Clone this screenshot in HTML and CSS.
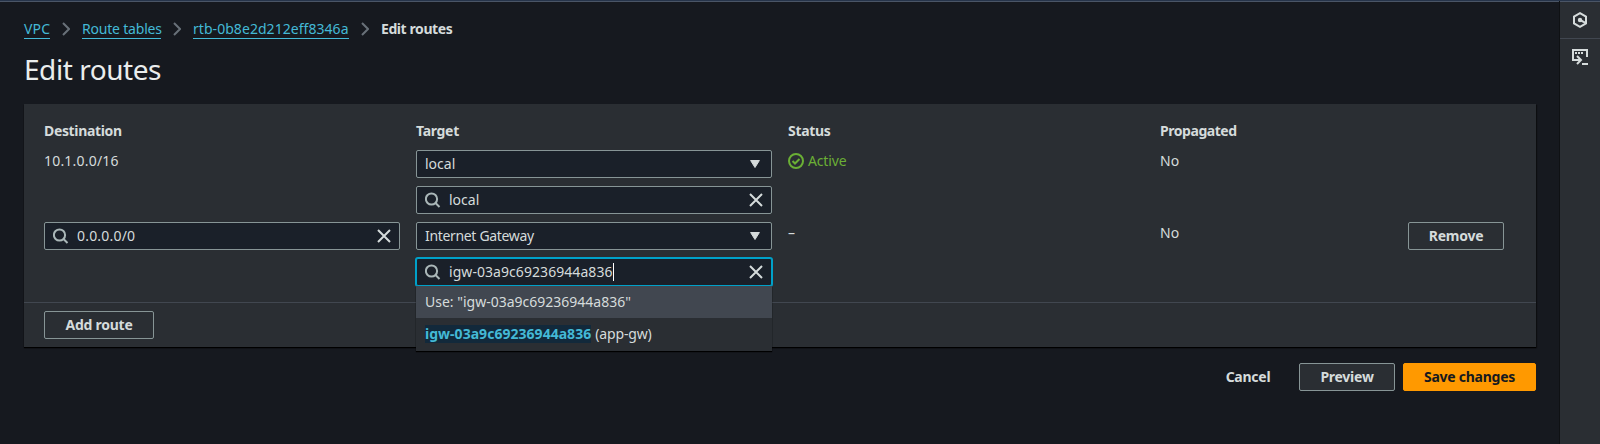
FILE: index.html
```html
<!DOCTYPE html>
<html lang="en">
<head>
<meta charset="utf-8">
<title>Edit routes</title>
<link rel="stylesheet" href="styles.css">
</head>
<body>
<svg class="sprite" aria-hidden="true">
  <symbol id="chevron" viewBox="0 0 8 14"><path d="M1 1l6 6-6 6" fill="none" stroke="#687078" stroke-width="2"/></symbol>
  <symbol id="search" viewBox="0 0 16 16"><circle cx="6.500" cy="7" r="5.600" fill="none" stroke="#aab7b8" stroke-width="2"/><path d="M10.500 11l4 4" stroke="#aab7b8" stroke-width="2"/></symbol>
  <symbol id="close" viewBox="0 0 14 14"><path d="M1 1l12 12M13 1L1 13" stroke="#d5dbdb" stroke-width="2"/></symbol>
  <symbol id="caret" viewBox="0 0 10 8"><path d="M.6.5h8.800L5 7.500z" fill="#d5dbdb" stroke="#d5dbdb" stroke-linejoin="round"/></symbol>
</svg>
<div class="app">
  <main class="content">
    <nav class="crumbs">
      <a class="link vpc">VPC</a><svg class="chev"><use href="#chevron"/></svg>
      <a class="link tables">Route tables</a><svg class="chev"><use href="#chevron"/></svg>
      <a class="link rtb">rtb-0b8e2d212eff8346a</a><svg class="chev"><use href="#chevron"/></svg>
      <span class="current">Edit routes</span>
    </nav>
    <h1 class="title">Edit routes</h1>
    <section class="panel">
      <div class="grid head">
        <div class="h-dest">Destination</div><div class="h-target">Target</div><div class="h-status">Status</div><div class="h-prop">Propagated</div>
      </div>
      <div class="grid">
        <div class="cell"><span class="cidr">10.1.0.0/16</span></div>
        <div class="stack">
          <div class="field"><span class="value local">local</span><svg class="caret"><use href="#caret"/></svg></div>
          <div class="field"><svg class="search"><use href="#search"/></svg><span class="value local">local</span><svg class="close"><use href="#close"/></svg></div>
        </div>
        <div class="cell active">
          <svg class="check" viewBox="0 0 16 16"><circle cx="8" cy="8" r="7" fill="none" stroke="#6aaf35" stroke-width="2"/><path d="M4.500 8l2.500 2.500 4.500-4.500" fill="none" stroke="#6aaf35" stroke-width="2"/></svg>
          <span class="active-text">Active</span>
        </div>
        <div class="cell">No</div>
      </div>
      <div class="grid second">
        <div class="field"><svg class="search"><use href="#search"/></svg><span class="value anyip">0.0.0.0/0</span><svg class="close"><use href="#close"/></svg></div>
        <div class="stack">
          <div class="field"><span class="value gateway">Internet Gateway</span><svg class="caret"><use href="#caret"/></svg></div>
          <div class="field focused">
            <svg class="search"><use href="#search"/></svg><span class="value igw">igw-03a9c69236944a836</span><i class="cursor"></i><svg class="close"><use href="#close"/></svg>
            <div class="menu">
              <div class="option hovered"><span class="use">Use: "igw-03a9c69236944a836"</span></div>
              <div class="option"><b class="match">igw-03a9c69236944a836</b><span class="tag">(app-gw)</span></div>
            </div>
          </div>
        </div>
        <div class="cell"><i class="dash">–</i></div>
        <div class="cell">No</div>
        <div><button class="btn remove">Remove</button></div>
      </div>
      <footer class="panel-foot"><button class="btn add">Add route</button></footer>
    </section>
    <div class="actions">
      <button class="btn cancel">Cancel</button><button class="btn preview">Preview</button><button class="btn save">Save changes</button>
    </div>
  </main>
  <aside class="rail">
    <div class="rail-item first">
      <svg width="16" height="16" viewBox="0 0 16 16" fill="none" stroke="#d5dbdb" stroke-width="2"><path d="M8 1.200L14 4.600v6.800L8 14.800 2 11.400V4.600z"/><circle cx="8" cy="8" r="2.200" fill="#d5dbdb" stroke="none"/><path d="M8 8l5.500 2.800"/></svg>
    </div>
    <div class="rail-item second-item">
      <svg width="16" height="16" viewBox="0 0 16 16" fill="none" stroke="#d5dbdb" stroke-width="2"><path d="M4 11H1V1h14v7"/><path d="M3 4h2M6 4h2M9 4h2"/><path d="M4 11h4.500M5 7l4 4-4 4M10 15h6"/></svg>
    </div>
  </aside>
</div>
</body>
</html>
```

FILE: styles.css
```css
* { box-sizing: border-box; }
body { margin: 0; background: #16191f; color: #d5dbdb; font: 14px/22px "Noto Sans", "Open Sans", sans-serif; white-space: nowrap; }
.sprite { position: absolute; width: 0; height: 0; }
.app { display: flex; height: 444px; border-top: 1px solid #26344a; }
.content { flex: 1; padding: 16px 24px 0; border-top: 1px solid #4a5566; }
svg { flex: none; display: block; }

.crumbs { display: flex; height: 22px; align-items: center; }
.link { color: #44b9d6; height: 20px; line-height: 20px; border-bottom: 1px solid #44b9d6; }
.vpc { width: 26px; letter-spacing: .2px; }
.tables { width: 79px; letter-spacing: -.2px; }
.rtb { width: 156px; letter-spacing: .05px; }
.chev { width: 8px; height: 14px; margin: 0 12px; }
.current { font-weight: 700; letter-spacing: -.42px; }
.title { margin: 11px 0 0; font-size: 28px; line-height: 36px; font-weight: 400; color: #eaeded; letter-spacing: -.45px; }

.panel { margin-top: 17px; height: 243px; background: #2a2e33; box-shadow: 0 1px 1px #000, 1px 1px 1px #0f1114; padding-top: 16px; }
.grid { display: grid; grid-template-columns: repeat(3, 356px) 232px 96px; column-gap: 16px; padding: 0 20px; }
.head { font-weight: 700; height: 30px; }
.h-dest, .h-prop { letter-spacing: -.45px; }
.h-dest { letter-spacing: -.35px; }
.h-target, .h-status { letter-spacing: -.3px; }
.stack { display: grid; gap: 8px; align-content: start; }
.second { margin-top: 8px; height: 80px; }
.cell { height: 22px; }
.cidr, .anyip { letter-spacing: .2px; }
.gateway { letter-spacing: -.33px; }
.igw { letter-spacing: .06px; }
.use { letter-spacing: 0; }
.tag { letter-spacing: -.15px; }
.field { display: flex; align-items: center; width: 356px; height: 28px; padding: 0 8px; background: #1a2029; border: 1px solid #879596; border-radius: 2px; }
.search { width: 16px; height: 16px; margin-right: 8px; }
.close { width: 14px; height: 14px; margin-left: auto; }
.caret { width: 10px; height: 8px; margin: 0 3px 0 auto; }
.active { display: flex; align-items: center; gap: 4px; color: #6aaf35; }
.active-text { letter-spacing: -.15px; }
.check { width: 16px; height: 16px; }
.dash { font-style: normal; }
.focused { position: relative; border-color: #00a1c9; box-shadow: 0 0 0 1px #00a1c9; }
.cursor { width: 1px; height: 18px; background: #fff; }
.menu { position: absolute; left: -1px; top: 27px; width: 356px; padding-bottom: 2px; background: #2a2e33; box-shadow: 0 1px 1px #000; }
.option { display: flex; align-items: center; height: 31px; padding: 0 9px; }
.hovered { background: #414750; height: 32px; }
.match { color: #44b9d6; background: #12293b; line-height: 18px; margin-right: 4px; letter-spacing: .03px; }
.panel-foot { border-top: 1px solid #414750; padding: 8px 20px; }

.btn { display: block; height: 28px; padding: 0; font: 700 14px/26px "Noto Sans", "Open Sans", sans-serif; color: #d5dbdb; background: #2a2e33; border: 1px solid #879596; border-radius: 2px; letter-spacing: -.25px; }
.remove, .preview { width: 96px; }
.add { width: 110px; }
.actions { display: flex; justify-content: flex-end; gap: 8px; margin-top: 16px; }
.cancel { width: 86px; border: 0; background: none; }
.save { width: 133px; background: #f90; border-color: #f90; color: #16191f; }

.rail { width: 40px; background: #2a2e33; box-shadow: -1px 0 0 #0f1114; border-top: 1px solid #4a5566; }
.rail-item { height: 37px; display: grid; place-items: center; }
.first { border-bottom: 1px solid #414750; }
.second-item { height: 35px; }
```
